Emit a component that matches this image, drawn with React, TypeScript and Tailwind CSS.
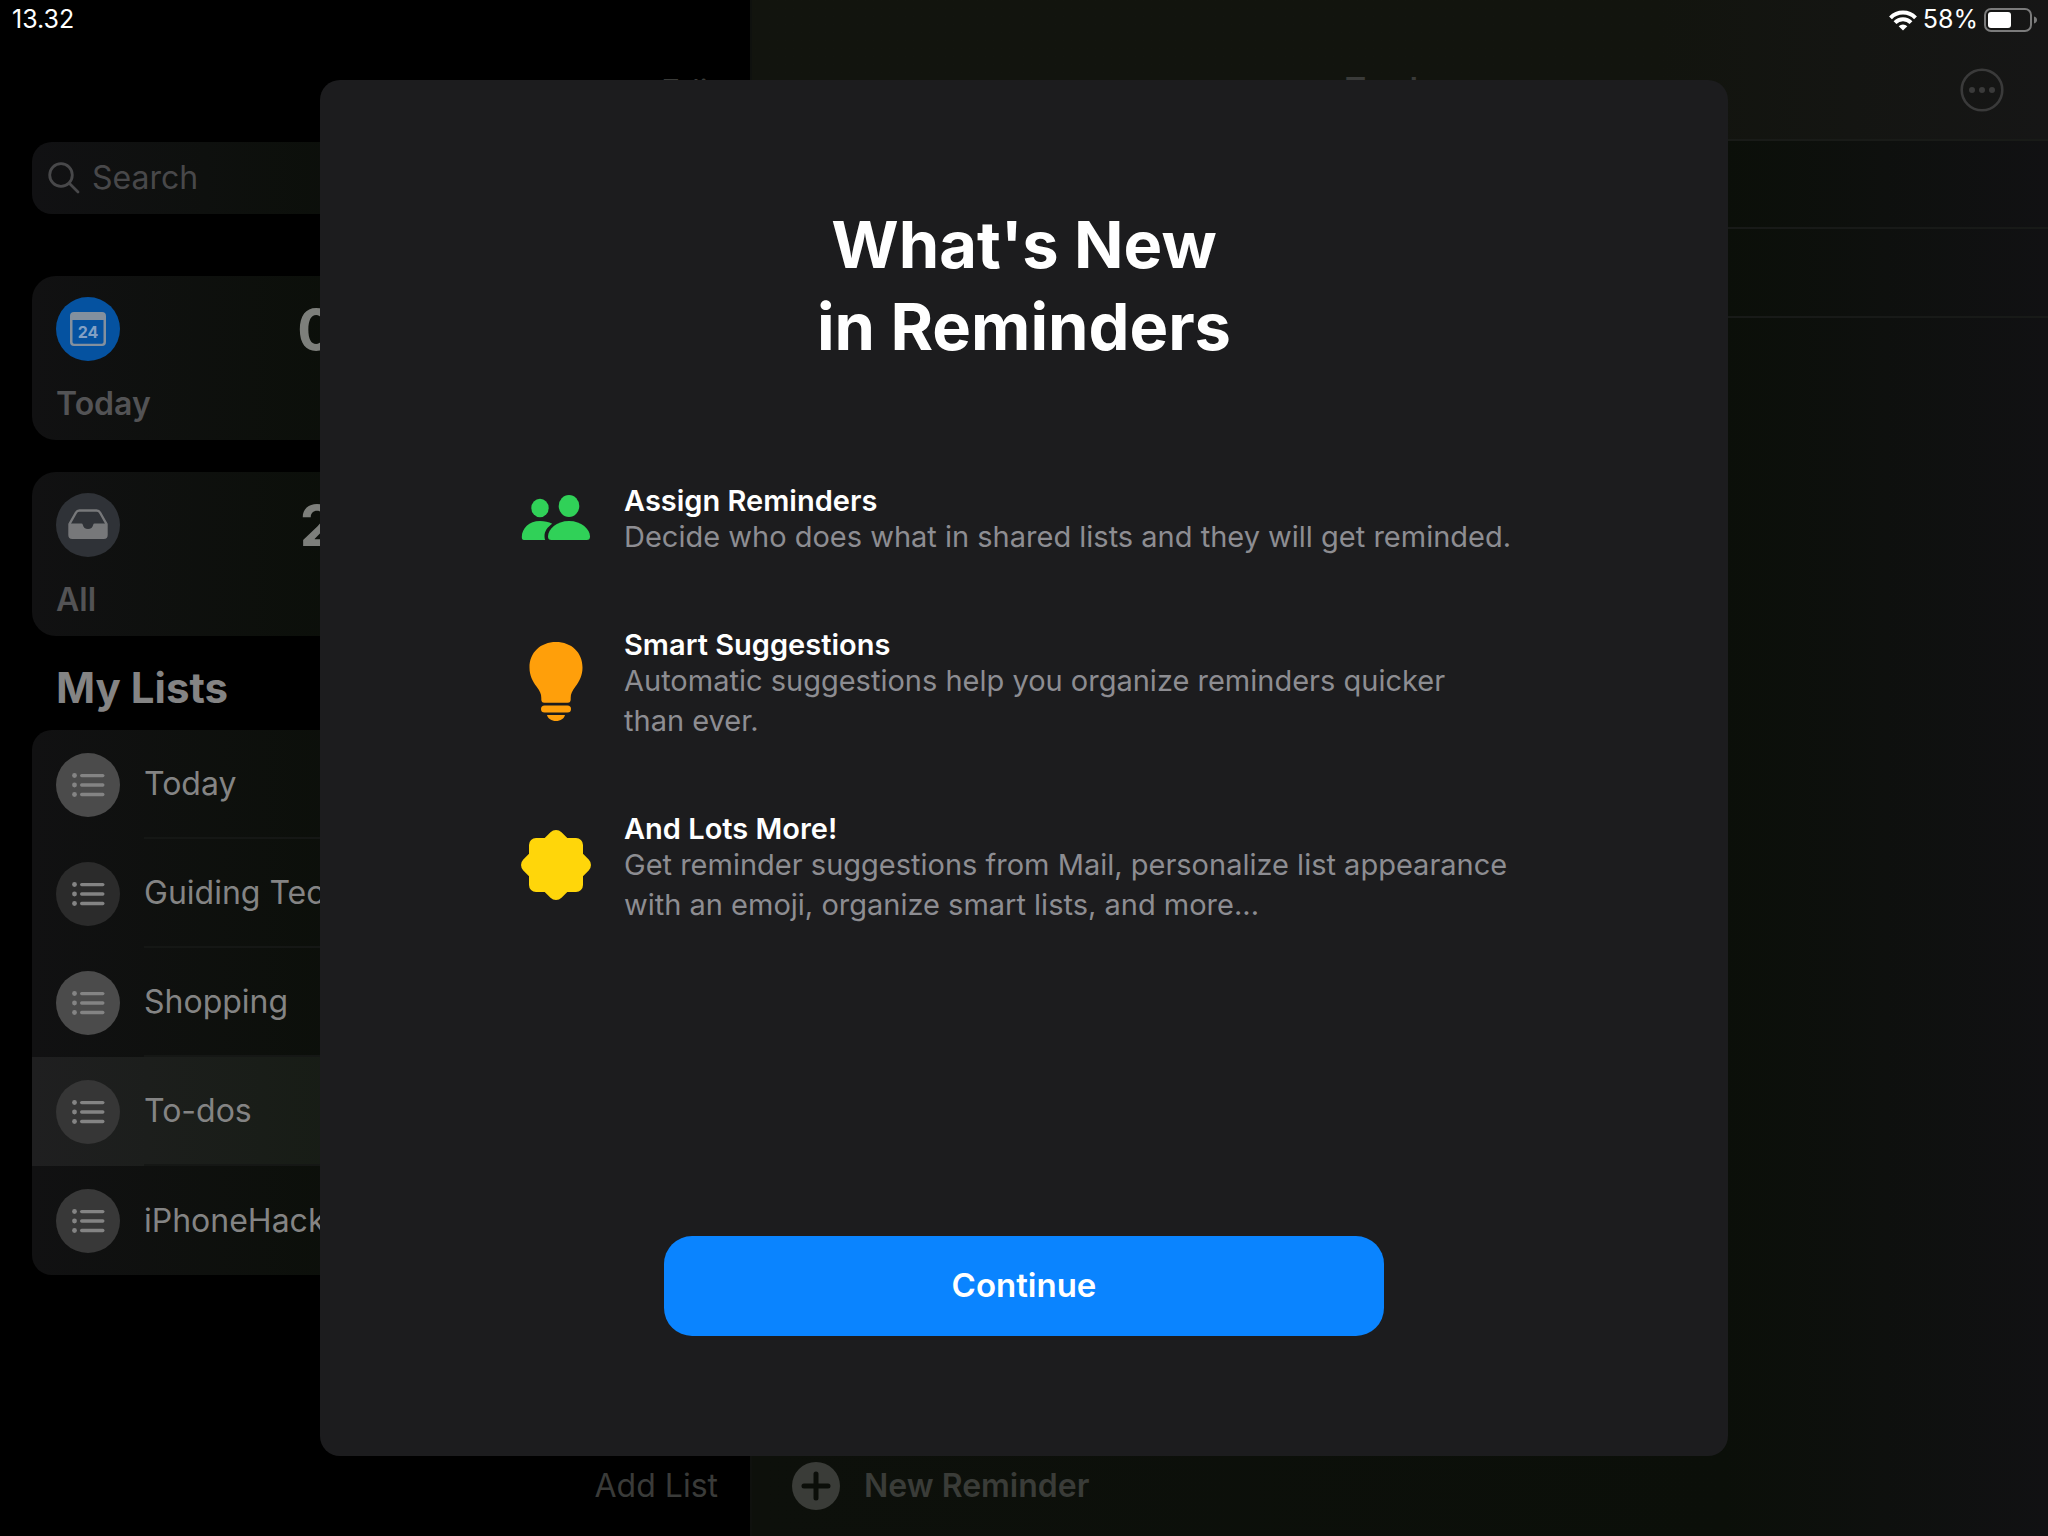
import type { ReactNode } from "react";

type ReminderList = {
  name: string;
  color: string;
  selected?: boolean;
};

const LISTS: ReminderList[] = [
  { name: "Today", color: "bg-[#4b4b4b]" },
  { name: "Guiding Tech", color: "bg-[#2b2b2b]" },
  { name: "Shopping", color: "bg-[#4b4b4b]" },
  { name: "To-dos", color: "bg-[#363636]", selected: true },
  { name: "iPhoneHacks", color: "bg-[#383838]" },
];

function ListIcon() {
  return (
    <svg viewBox="0 0 64 64" className="size-16" fill="#848484" aria-hidden="true">
      <circle cx="18.5" cy="22.5" r="2.4" />
      <circle cx="18.5" cy="32" r="2.4" />
      <circle cx="18.5" cy="41.5" r="2.4" />
      <rect x="24" y="20.9" width="24.5" height="3.4" rx="1.7" />
      <rect x="24" y="30.3" width="24.5" height="3.4" rx="1.7" />
      <rect x="24" y="39.8" width="24.5" height="3.4" rx="1.7" />
    </svg>
  );
}

function CalendarIcon() {
  return (
    <svg viewBox="0 0 64 64" className="size-16" aria-hidden="true">
      <path
        fillRule="evenodd"
        fill="#83909e"
        d="M18 15h28a4 4 0 0 1 4 4v26a4 4 0 0 1-4 4H18a4 4 0 0 1-4-4V19a4 4 0 0 1 4-4Zm-1.500 8v22a1.700 1.700 0 0 0 1.700 1.700h27.600a1.700 1.700 0 0 0 1.700-1.700V23Z"
      />
      <text x="32" y="41" textAnchor="middle" fontSize="16" fontWeight="700" fill="#83a0c4">
        24
      </text>
    </svg>
  );
}

function TrayIcon() {
  return (
    <svg viewBox="0 0 64 64" className="size-16" aria-hidden="true">
      <path
        d="M13.500 31 20 19.500a4 4 0 0 1 3.500-2h17a4 4 0 0 1 3.500 2L50.500 31"
        fill="none"
        stroke="#77787a"
        strokeWidth="2.400"
      />
      <path
        d="M12.300 30.500h13a1.500 1.500 0 0 1 1.500 1.300 5.300 5.300 0 0 0 10.400 0 1.500 1.500 0 0 1 1.500-1.300h13V42a4 4 0 0 1-4 4H16.300a4 4 0 0 1-4-4Z"
        fill="#77787a"
      />
    </svg>
  );
}

function PeopleIcon() {
  return (
    <svg viewBox="0 0 70 48" className="h-12 w-[70px]" fill="#30d158" aria-hidden="true">
      <ellipse cx="19" cy="15" rx="8.700" ry="9.300" />
      <ellipse cx="48" cy="13" rx="10.300" ry="11" />
      <path d="M19 28c4.500 0 8.800 1 12.200 2.800C26.500 34 23.500 38.500 23.500 43c0 1.500.2 3 .8 4H3c-1.600 0-2.200-1-2.200-3C.8 35.500 8 28 19 28Z" />
      <path d="M48 28c12.500 0 21 8.200 21 15.500 0 2.500-1 3.500-3.500 3.500h-35c-2.500 0-3.500-1-3.500-3.500C27 36.200 35.500 28 48 28Z" />
    </svg>
  );
}

function BulbIcon() {
  return (
    <svg viewBox="0 0 54 80" className="h-20 w-[54px]" fill="#ff9f0a" aria-hidden="true">
      <path d="M27 1C11.500 1 .5 11.500.5 26.500c0 8 3 13.500 7.200 19.300 3.200 4.400 4.600 7 4.600 11.200v1.500c0 2 1 3.300 3 3.300h23.400c2 0 3-1.300 3-3.300V57c0-4.200 1.400-6.800 4.600-11.200 4.200-5.800 7.200-11.300 7.200-19.300C53.500 11.500 42.500 1 27 1Z" />
      <rect x="12" y="64.500" width="30" height="7" rx="3.500" />
      <path d="M18 74h18c-.8 3.500-4.500 6-9 6s-8.200-2.500-9-6Z" />
    </svg>
  );
}

function SealIcon() {
  return (
    <svg viewBox="0 0 70 70" className="size-[70px]" fill="#ffd60a" aria-hidden="true">
      <path d="M29.500 2.300a7.800 7.800 0 0 1 11 0L46.300 8H55a7 7 0 0 1 7 7v8.700l5.700 5.800a7.800 7.800 0 0 1 0 11L62 46.300V55a7 7 0 0 1-7 7h-8.700l-5.800 5.700a7.800 7.800 0 0 1-11 0L23.700 62H15a7 7 0 0 1-7-7v-8.700l-5.700-5.800a7.800 7.800 0 0 1 0-11L8 23.700V15a7 7 0 0 1 7-7h8.700Z" />
    </svg>
  );
}

function StatusBar() {
  return (
    <div className="absolute inset-x-0 top-0 z-30 flex h-10 items-center justify-between pr-2.5 pl-3 text-[25px] text-white">
      <span>13.32</span>
      <div className="flex items-center gap-1.5">
        <svg viewBox="0 0 28 21" className="h-[21px] w-7" fill="none" stroke="#fff" strokeWidth="4" aria-hidden="true">
          <path d="M1.500 7.800a17.500 17.500 0 0 1 25 0" />
          <path d="M6 12.600a11.300 11.300 0 0 1 16 0" />
          <path d="m14 20.500-4.300-4.300a6.100 6.100 0 0 1 8.600 0Z" fill="#fff" stroke="none" />
        </svg>
        <span>58%</span>
        <svg viewBox="0 0 54 24" className="h-6 w-[54px]" aria-hidden="true">
          <rect x="1" y="1" width="46" height="22" rx="6" fill="none" stroke="#7b7b7b" strokeWidth="2" />
          <rect x="4" y="4" width="23" height="16" rx="3" fill="#fff" />
          <path d="M50 8.500c2 .6 3 1.900 3 3.500s-1 2.900-3 3.500Z" fill="#7b7b7b" />
        </svg>
      </div>
    </div>
  );
}

function SummaryCard({ icon, color, label, count }: { icon: ReactNode; color: string; label: string; count: number }) {
  return (
    <button className="flex h-[164px] flex-col justify-between rounded-3xl bg-linear-to-r from-[#111112] to-[#0b0f09] px-6 pt-[21px] pb-4 text-left">
      <span className="flex w-full items-start justify-between">
        <span className={`size-16 rounded-full ${color}`}>{icon}</span>
        <span className="text-[56px] leading-[66px] font-bold text-[#7d7f7b]">{count}</span>
      </span>
      <span className="text-[32px] leading-10 font-semibold text-[#535355]">{label}</span>
    </button>
  );
}

function Sidebar() {
  return (
    <aside className="flex w-[752px] shrink-0 flex-col border-r-2 border-[#0f110e] bg-black px-8">
      <div className="flex h-[142px] items-end justify-end pb-7">
        <button className="text-[32px] leading-[44px] text-[#3a3b39]">Edit</button>
      </div>

      <label className="flex h-[72px] items-center gap-3 rounded-[20px] bg-linear-to-r from-[#111113] via-[#0b0f09] to-[#0b0f09] px-4">
        <svg viewBox="0 0 32 32" className="size-8" fill="none" stroke="#48484a" strokeWidth="2.800" strokeLinecap="round" aria-hidden="true">
          <circle cx="13" cy="13" r="11.300" />
          <path d="m21.500 21.500 8.500 8.500" />
        </svg>
        <input
          type="search"
          aria-label="Search"
          placeholder="Search"
          className="min-w-0 flex-1 bg-transparent text-[32px] leading-[44px] text-[#848484] outline-none placeholder:text-[#48484a]"
        />
      </label>

      <div className="mt-[62px] grid grid-cols-2 gap-8">
        <div className="flex flex-col gap-8">
          <SummaryCard icon={<CalendarIcon />} color="bg-[#0552a0]" label="Today" count={0} />
          <SummaryCard icon={<TrayIcon />} color="bg-[#2f3237]" label="All" count={2} />
        </div>
      </div>

      <h2 className="mt-6 px-6 text-[42px] leading-[56px] font-bold text-[#848484]">My Lists</h2>

      <ul className="mt-3.5 overflow-hidden rounded-[20px] bg-linear-to-r from-[#111112] via-[#0b0f09] to-[#0b0f09]">
        {LISTS.map((list, i) => (
          <li key={list.name} className={list.selected ? "bg-linear-to-r from-[#1f1f20] via-[#161c14] to-[#161c14]" : ""}>
            <button className="flex h-[109px] w-full items-center gap-6 pl-6 text-left">
              <span className={`size-16 shrink-0 rounded-full ${list.color}`}>
                <ListIcon />
              </span>
              <span
                className={`flex h-full flex-1 items-center text-[32px] text-[#848484] ${
                  i < LISTS.length - 1 ? "border-b-2 border-[#151715]" : ""
                }`}
              >
                {list.name}
              </span>
            </button>
          </li>
        ))}
      </ul>

      <footer className="mt-auto flex h-[100px] items-center justify-end">
        <button className="text-[32px] leading-[44px] text-[#3a3b39]">Add List</button>
      </footer>
    </aside>
  );
}

function ListPane() {
  return (
    <section className="flex flex-1 flex-col bg-linear-to-r from-[#0d100b] via-[#0b0f09] via-75% to-[#111113]">
      <header className="flex h-[141px] items-center border-b-2 border-[#191b18] bg-linear-to-r from-[#12140e] via-[#12140e] via-70% to-[#161616] px-11 pt-10">
        <div className="w-11" />
        <h1 className="flex-1 text-center text-[32px] font-semibold text-[#3a3b39]">To-dos</h1>
        <button aria-label="More" className="text-[#3a3a3a]">
          <svg viewBox="0 0 44 44" className="size-11" fill="currentColor" aria-hidden="true">
            <circle cx="22" cy="22" r="20.300" fill="none" stroke="currentColor" strokeWidth="2.600" />
            <circle cx="12" cy="22" r="3" />
            <circle cx="22" cy="22" r="3" />
            <circle cx="32" cy="22" r="3" />
          </svg>
        </button>
      </header>
      <div className="h-[88px] border-b-2 border-[#181a18]" />
      <div className="h-[89px] border-b-2 border-[#181a18]" />

      <footer className="mt-auto flex h-[100px] items-center px-10">
        <button className="flex items-center gap-6 text-[32px] leading-[44px] font-semibold text-[#3a3c38]">
          <svg viewBox="0 0 48 48" className="size-12" aria-hidden="true">
            <circle cx="24" cy="24" r="24" fill="#3a3c38" />
            <path d="M24 12v24M12 24h24" stroke="#0b0e09" strokeWidth="5" strokeLinecap="round" />
          </svg>
          New Reminder
        </button>
      </footer>
    </section>
  );
}

function Feature({ icon, title, children }: { icon: ReactNode; title: string; children: ReactNode }) {
  return (
    <li className="flex items-center gap-[33px]">
      <div className="flex w-[70px] shrink-0 justify-center pb-2">{icon}</div>
      <div>
        <h3 className="text-[29px] leading-8 font-semibold text-white">{title}</h3>
        <p className="text-[29px] leading-10 text-[#8d8d92]">{children}</p>
      </div>
    </li>
  );
}

function WhatsNew() {
  return (
    <div
      role="dialog"
      aria-modal="true"
      aria-labelledby="whats-new-title"
      className="flex min-h-[1376px] w-[1408px] max-w-full flex-col items-center rounded-[20px] bg-[#1c1c1e] pt-[124px] pb-[120px]"
    >
      <h2 id="whats-new-title" className="text-center text-[65px] leading-[82px] font-bold text-white">
        What's New
        <br />
        in Reminders
      </h2>

      <ul className="mt-[117px] flex w-full flex-col gap-[72px] pr-[200px] pl-[201px]">
        <Feature icon={<PeopleIcon />} title="Assign Reminders">
          Decide who does what in shared lists and they will get reminded.
        </Feature>
        <Feature icon={<BulbIcon />} title="Smart Suggestions">
          Automatic suggestions help you organize reminders quicker
          <br />
          than ever.
        </Feature>
        <Feature icon={<SealIcon />} title="And Lots More!">
          Get reminder suggestions from Mail, personalize list appearance
          <br />
          with an emoji, organize smart lists, and more...
        </Feature>
      </ul>

      <button className="mt-auto h-[100px] w-[720px] rounded-[28px] bg-[#0a84ff] text-[33px] font-semibold text-white">
        Continue
      </button>
    </div>
  );
}

export default function App() {
  return (
    <div className="relative flex min-h-screen bg-black font-[Inter,'Liberation_Sans',sans-serif]">
      <StatusBar />
      <Sidebar />
      <ListPane />
      <div className="absolute inset-0 z-20 flex items-center justify-center">
        <WhatsNew />
      </div>
    </div>
  );
}
